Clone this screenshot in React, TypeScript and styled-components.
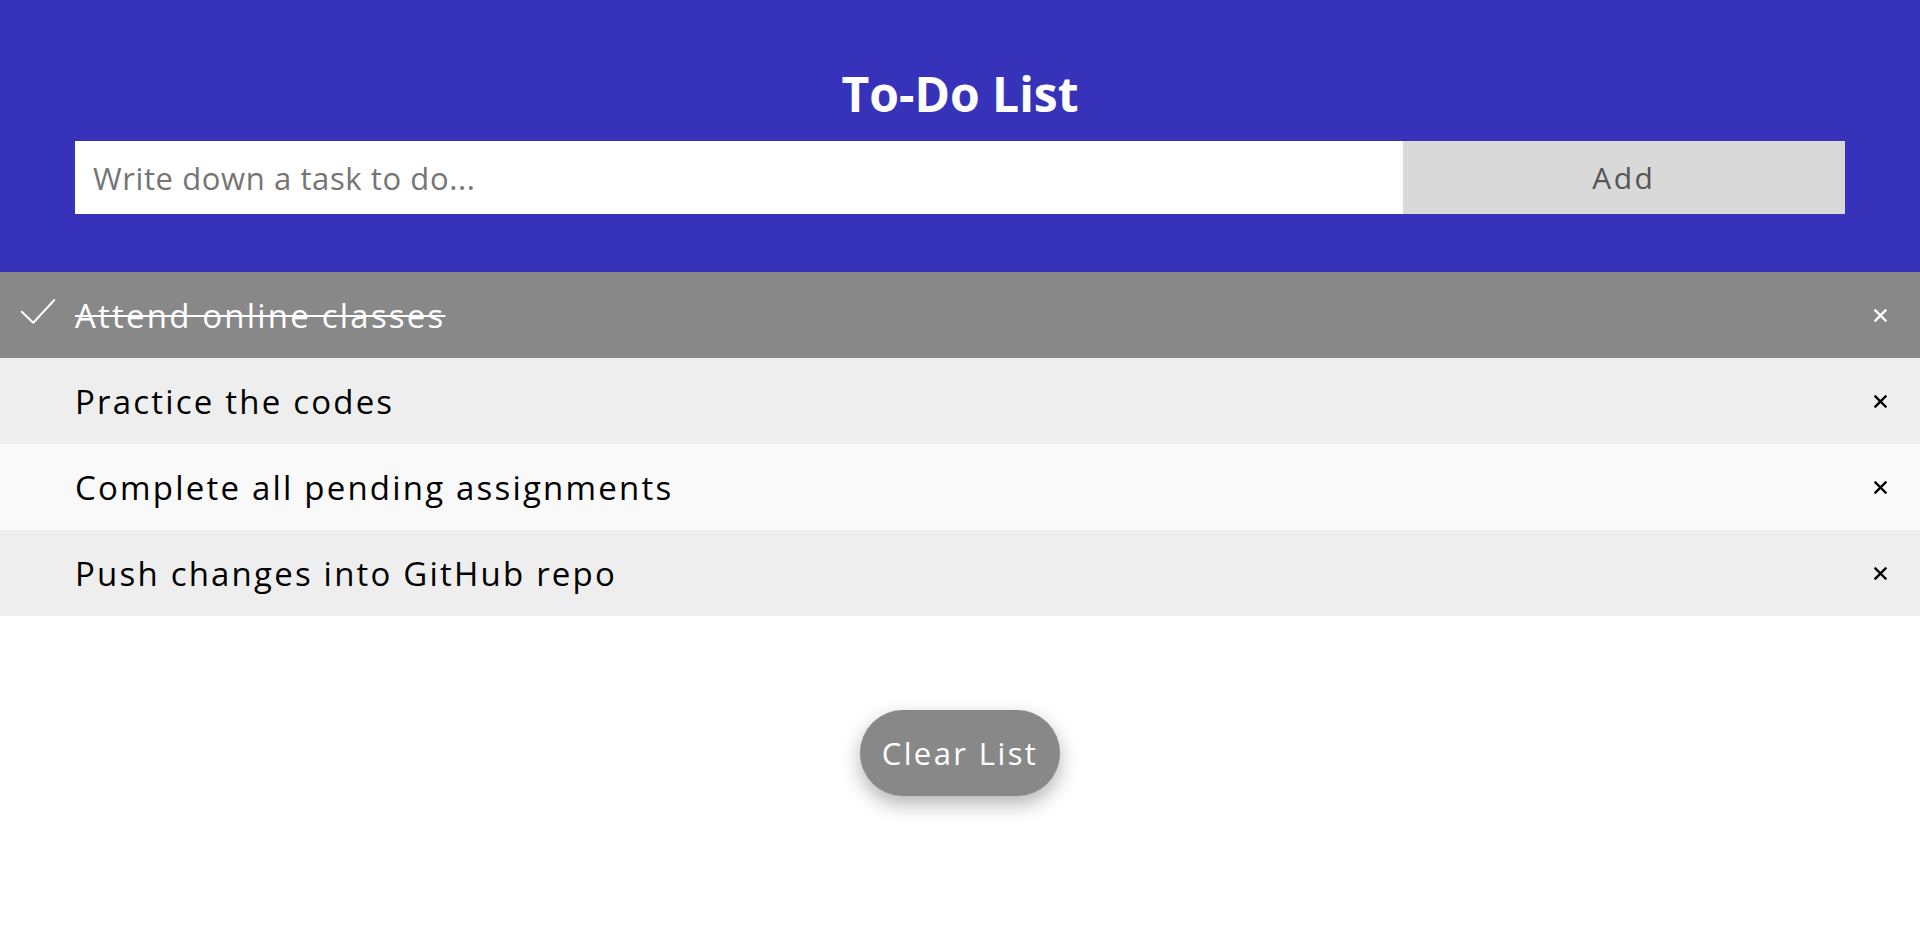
import styled, { createGlobalStyle } from "styled-components";

interface ITask {
  text: string;
  done: boolean;
}

const tasks: ITask[] = [
  { text: "Attend online classes", done: true },
  { text: "Practice the codes", done: false },
  { text: "Complete all pending assignments", done: false },
  { text: "Push changes into GitHub repo", done: false },
];

const GlobalStyle = createGlobalStyle`
  body {
    margin: 0;
    font-family: "Open Sans", "Liberation Sans", sans-serif;
    background: #ffffff;
  }
  * {
    box-sizing: border-box;
  }
`;

const Header = styled.header`
  background-color: #3732ba;
  padding: 70px 75px 58px;
  text-align: center;
`;

const Title = styled.h2`
  margin: 0 0 23px;
  font-size: 48px;
  line-height: 1;
  font-weight: 700;
  color: #ffffff;
`;

const InputRow = styled.div`
  display: flex;
  height: 73px;
`;

const TaskInput = styled.input`
  width: 75%;
  flex: none;
  border: none;
  outline: none;
  padding: 0 0 0 18px;
  font-family: inherit;
  font-size: 31px;
  letter-spacing: 0.6px;
  color: #222;
  background: #ffffff;
  &::placeholder {
    color: #757575;
  }
`;

const AddButton = styled.button`
  width: 25%;
  flex: none;
  border: none;
  padding: 0;
  background: #d9d9d9;
  color: #555555;
  font-family: inherit;
  font-size: 30px;
  letter-spacing: 2.5px;
  cursor: pointer;
  &:hover {
    background: #bbbbbb;
  }
`;

const List = styled.ul`
  margin: 0;
  padding: 0;
  list-style: none;
`;

const Row = styled.li<{ $done: boolean; $odd: boolean }>`
  display: flex;
  align-items: center;
  height: 86px;
  padding: 0 33px 0 20px;
  font-size: 33px;
  letter-spacing: 2.2px;
  background: ${(p) => (p.$done ? "#888888" : p.$odd ? "#f9f9f9" : "#eeeeee")};
  color: ${(p) => (p.$done ? "#ffffff" : "#000000")};
  cursor: pointer;
`;

const CheckSlot = styled.span`
  width: 36px;
  height: 28px;
  margin: 0 19px 8px 0;
  flex-shrink: 0;
  display: flex;
`;

const TaskText = styled.span<{ $done: boolean }>`
  flex: 1;
  text-decoration: ${(p) => (p.$done ? "line-through" : "none")};
  text-decoration-thickness: 2px;
`;

const Close = styled.span`
  display: flex;
  width: 13px;
  height: 13px;
`;

const Footer = styled.div`
  display: flex;
  justify-content: center;
  padding: 94px 0 80px;
`;

const ClearButton = styled.button`
  height: 86px;
  padding: 0 22px;
  border: none;
  border-radius: 43px;
  background: #888888;
  color: #ffffff;
  font-family: inherit;
  font-size: 31px;
  letter-spacing: 2.4px;
  box-shadow: 0 8px 20px rgba(0, 0, 0, 0.3);
  cursor: pointer;
`;

const CheckIcon = () => (
  <svg width="36" height="28" viewBox="0 0 36 28" fill="none">
    <polyline
      points="1.7,14.7 13.3,25.7 34.3,3"
      stroke="#ffffff"
      strokeWidth="2"
      strokeLinecap="round"
      strokeLinejoin="round"
    />
  </svg>
);

const CloseIcon = ({ color }: { color: string }) => (
  <svg width="13" height="13" viewBox="0 0 13 13">
    <path d="M1.5 1.5 L11.5 11.5 M11.5 1.5 L1.5 11.5" stroke={color} strokeWidth="2.4" strokeLinecap="square" />
  </svg>
);

export default function App() {
  return (
    <>
      <GlobalStyle />
      <Header>
        <Title>To-Do List</Title>
        <InputRow>
          <TaskInput type="text" placeholder="Write down a task to do..." />
          <AddButton>Add</AddButton>
        </InputRow>
      </Header>
      <List>
        {tasks.map((t, i) => (
          <Row key={t.text} $done={t.done} $odd={i % 2 === 0}>
            <CheckSlot>{t.done && <CheckIcon />}</CheckSlot>
            <TaskText $done={t.done}>{t.text}</TaskText>
            <Close>
              <CloseIcon color={t.done ? "#ffffff" : "#000000"} />
            </Close>
          </Row>
        ))}
      </List>
      <Footer>
        <ClearButton>Clear List</ClearButton>
      </Footer>
    </>
  );
}
